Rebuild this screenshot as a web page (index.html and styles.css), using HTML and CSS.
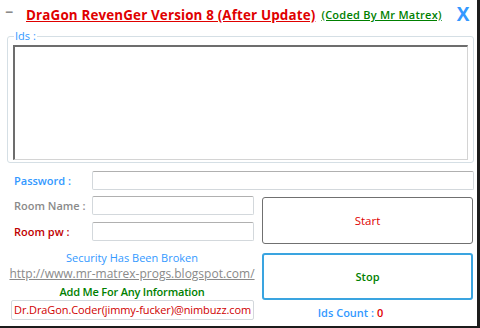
FILE: index.html
```html
<!DOCTYPE html>
<html lang="en">
<head>
    <meta charset="UTF-8">
    <title>DraGon RevenGer Version 8</title>
    <link rel="stylesheet" href="styles.css">
</head>
<body>
    <div class="window">
        <div class="titlebar">
            <span class="minimize">&minus;</span>
            <span class="title">DraGon RevenGer Version 8 (After Update)</span>
            <span class="coded">(Coded By Mr Matrex)</span>
            <span class="close">X</span>
        </div>

        <fieldset class="ids-box">
            <legend>Ids :</legend>
            <textarea class="ids-list"></textarea>
        </fieldset>

        <div class="row password-row">
            <label class="lbl lbl-blue">Password :</label>
            <input class="field field-wide" type="text">
        </div>

        <div class="bottom">
            <div class="left">
                <div class="row">
                    <label class="lbl lbl-gray">Room Name :</label>
                    <input class="field" type="text">
                </div>
                <div class="row">
                    <label class="lbl lbl-red">Room pw :</label>
                    <input class="field" type="text">
                </div>
                <div class="info">
                    <p class="security">Security Has Been Broken</p>
                    <p class="link">http://www.mr-matrex-progs.blogspot.com/</p>
                    <p class="addme">Add Me For Any Information</p>
                    <div class="contact">Dr.DraGon.Coder(jimmy-fucker)@nimbuzz.com</div>
                </div>
            </div>
            <div class="right">
                <button class="btn btn-start">Start</button>
                <button class="btn btn-stop">Stop</button>
                <div class="count">Ids Count : <span class="count-num">0</span></div>
            </div>
        </div>
    </div>
</body>
</html>
```

FILE: styles.css
```css
html, body {
    margin: 0;
    padding: 0;
}

body {
    width: 480px;
    height: 328px;
    background: #1c1c1c;
    font-family: "Open Sans", Arial, sans-serif;
    overflow: hidden;
}

.window {
    width: 477px;
    height: 326px;
    background: #fff;
    box-sizing: border-box;
    padding: 0 0 0 7px;
}

.titlebar {
    height: 29px;
    display: flex;
    align-items: center;
}

.minimize {
    color: #8a8a8a;
    font-weight: bold;
    font-size: 14px;
    width: 19px;
    margin-top: -6px;
    margin-left: -2px;
    padding-right: 2px;
}

.title {
    color: #e00000;
    font-weight: bold;
    font-size: 13.4px;
    text-decoration: underline;
    letter-spacing: 0.15px;
}

.coded {
    color: #008000;
    font-weight: 600;
    font-size: 11px;
    text-decoration: underline;
    margin-left: 6px;
    letter-spacing: 0.25px;
}

.close {
    color: #3399ff;
    font-weight: bold;
    font-size: 19px;
    margin-left: 15px;
    margin-top: -2px;
}

.ids-box {
    margin: 2px 0 0 0;
    width: 467px;
    height: 132px;
    box-sizing: border-box;
    border: 1px solid #d5dfe5;
    border-radius: 3px;
    padding: 0 5px;
}

.ids-box legend {
    color: #3399ff;
    font-size: 11px;
    padding: 0 1px;
    margin-left: 1px;
    line-height: 10px;
}

.ids-list {
    display: block;
    width: 455px;
    height: 115px;
    box-sizing: border-box;
    margin: 4px 0 0 0;
    border: 1px solid #d4d4d4;
    border-top: 2px solid #6d6d6d;
    border-left: 2px solid #6d6d6d;
    resize: none;
}

.row {
    display: flex;
    align-items: center;
}

.password-row {
    margin-top: 8px;
}

.lbl {
    width: 78px;
    padding-left: 7px;
    font-size: 11px;
    font-weight: 600;
}

.lbl-blue { color: #3399ff; }
.lbl-gray { color: #8a8a8a; }
.lbl-red { color: #c00000; }

.field {
    width: 162px;
    height: 19px;
    box-sizing: border-box;
    border: 1px solid #d3d8dc;
    border-top-color: #b0b0b0;
    border-radius: 2px;
    margin: 0;
}

.field-wide {
    width: 382px;
}

.bottom {
    display: flex;
    margin-top: 6px;
}

.left {
    width: 255px;
    display: flex;
    flex-direction: column;
    gap: 7px;
}

.info {
    margin-top: 2px;
    text-align: center;
    width: 250px;
}

.info p {
    margin: 0;
    font-size: 11px;
    line-height: 16px;
}

.security {
    color: #3399ff;
}

.link {
    color: #8a8a8a;
    text-decoration: underline;
    font-size: 12px !important;
    letter-spacing: 0;
}

.addme {
    color: #008000;
    font-weight: 600;
    letter-spacing: -0.2px;
    margin-top: 2px !important;
}

.contact {
    margin: 0 0 0 4px;
    width: 243px;
    height: 20px;
    box-sizing: border-box;
    border: 1px solid #d3d8dc;
    border-radius: 2px;
    color: #d00000;
    font-size: 11px;
    line-height: 18px;
    text-align: center;
    white-space: nowrap;
    letter-spacing: -0.1px;
}

.right {
    width: 211px;
    display: flex;
    flex-direction: column;
}

.btn {
    width: 211px;
    height: 47px;
    background: #fff;
    border-radius: 3px;
    font-family: "Open Sans", Arial, sans-serif;
    font-size: 11px;
    padding: 0;
}

.btn-start {
    border: 1px solid #707070;
    color: #e00000;
    margin-top: 1px;
    font-size: 11.5px;
}

.btn-stop {
    border: 2px solid #3aa4e0;
    color: #008000;
    font-weight: 600;
    margin-top: 9px;
}

.count {
    margin-top: 5px;
    text-align: center;
    color: #3399ff;
    font-size: 11px;
    font-weight: 600;
    padding-right: 34px;
}

.count-num {
    color: #e00000;
}
```
